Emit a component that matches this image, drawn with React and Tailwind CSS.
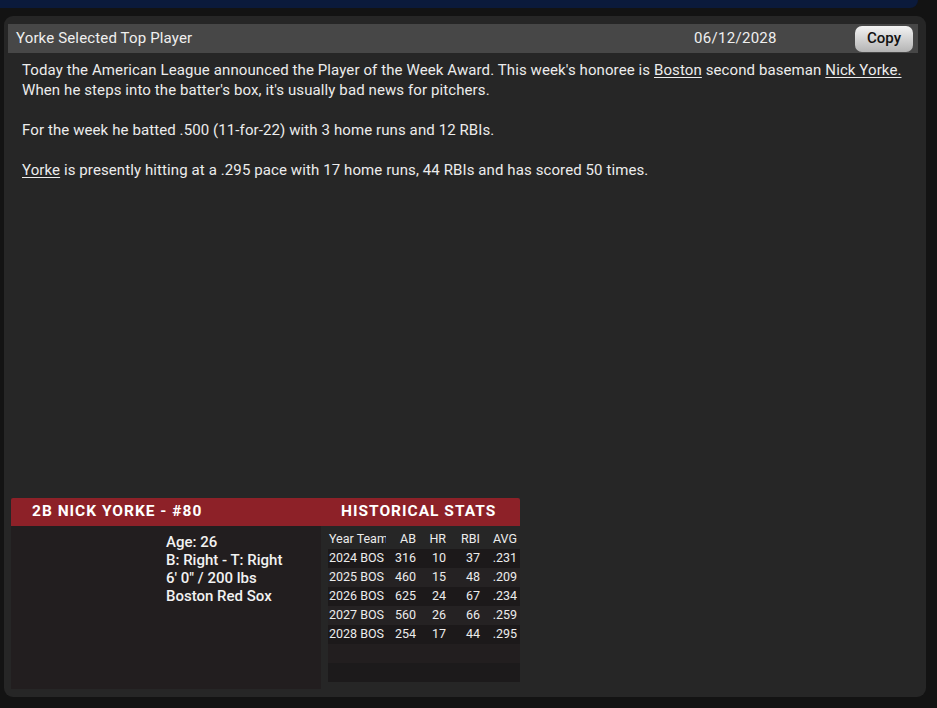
import React from "react";

const stats = [
  ["2024 BOS", "316", "10", "37", ".231"],
  ["2025 BOS", "460", "15", "48", ".209"],
  ["2026 BOS", "625", "24", "67", ".234"],
  ["2027 BOS", "560", "26", "66", ".259"],
  ["2028 BOS", "254", "17", "44", ".295"],
];

function StatRow({ row, i }) {
  const bg = i % 2 === 0 ? "bg-[#1c191a]" : "bg-[#252223]";
  return (
    <div className={`flex h-[19px] items-center text-[12.5px] text-[#ececec] ${bg}`}>
      <span className="w-[58px] pl-[1px] whitespace-nowrap">{row[0]}</span>
      <span className="w-[30px] text-right">{row[1]}</span>
      <span className="w-[30px] text-right">{row[2]}</span>
      <span className="w-[34px] text-right">{row[3]}</span>
      <span className="w-[37px] text-right">{row[4]}</span>
    </div>
  );
}

function PlayerCard() {
  return (
    <div className="w-[509px] ml-[3px]">
      <div className="flex h-[28px] items-center bg-[#8d2128] text-[15.5px] tracking-[1px] font-bold text-white rounded-t-[2px]">
        <span className="pl-[21px] w-[330px]">2B NICK YORKE - #80</span>
        <span>HISTORICAL STATS</span>
      </div>
      <div className="flex gap-[5px]">
        <div className="w-[310px] h-[163px] bg-[#221e1f] pt-[7px] pl-[155px] text-[15px] font-medium leading-[18px] text-[#f2f2f2]">
          <div>Age: 26</div>
          <div>B: Right - T: Right</div>
          <div>6' 0" / 200 lbs</div>
          <div>Boston Red Sox</div>
        </div>
        <div className="w-[194px] pt-[4px] pl-[2px]">
          <div className="flex h-[19px] items-center text-[12.5px] text-[#ececec]">
            <span className="w-[58px] pl-[1px] whitespace-nowrap overflow-hidden">Year Team</span>
            <span className="w-[30px] text-right">AB</span>
            <span className="w-[30px] text-right">HR</span>
            <span className="w-[34px] text-right">RBI</span>
            <span className="w-[37px] text-right">AVG</span>
          </div>
          {stats.map((r, i) => (
            <StatRow key={r[0]} row={r} i={i} />
          ))}
          <div className="h-[19px] bg-[#221e1f]" />
          <div className="h-[19px] bg-[#1c1a1b]" />
        </div>
      </div>
    </div>
  );
}

export default function App() {
  return (
    <div className="min-h-[708px] bg-[#131313] font-['Roboto',sans-serif]">
      <div className="h-[8px] w-[918px] bg-[#0b1a3b] rounded-br-[8px]" />
      <div className="mt-[8px] ml-[4px] w-[922px] h-[681px] rounded-[9px] bg-[#262626] flex flex-col pt-[8px] pl-[4px] pr-[8px] pb-[8px]">
        <div className="flex h-[29px] items-center bg-[#474747] text-[15px] tracking-[0.15px] text-[#efefef]">
          <span className="pl-[8px] flex-1">Yorke Selected Top Player</span>
          <span className="w-[161px] tracking-[0.3px]">06/12/2028</span>
          <button className="mr-[5px] h-[26px] w-[58px] rounded-[7px] bg-gradient-to-b from-[#f4f4f4] to-[#b4b4b4] text-[15px] tracking-normal font-medium text-[#111]">
            Copy
          </button>
        </div>
        <div className="pt-[7px] pl-[14px] text-[15px] tracking-[0.1px] leading-[20px] text-[#ececec]">
          <p className="whitespace-nowrap">
            Today the American League announced the Player of the Week Award. This week's honoree is{" "}
            <span className="underline underline-offset-2">Boston</span> second baseman{" "}
            <span className="underline underline-offset-2">Nick Yorke.</span>
            <br />
            When he steps into the batter's box, it's usually bad news for pitchers.
          </p>
          <p className="mt-[20px]">For the week he batted .500 (11-for-22) with 3 home runs and 12 RBIs.</p>
          <p className="mt-[20px]">
            <span className="underline underline-offset-2">Yorke</span> is presently hitting at a .295 pace with 17
            home runs, 44 RBIs and has scored 50 times.
          </p>
        </div>
        <div className="mt-auto">
          <PlayerCard />
        </div>
      </div>
    </div>
  );
}
